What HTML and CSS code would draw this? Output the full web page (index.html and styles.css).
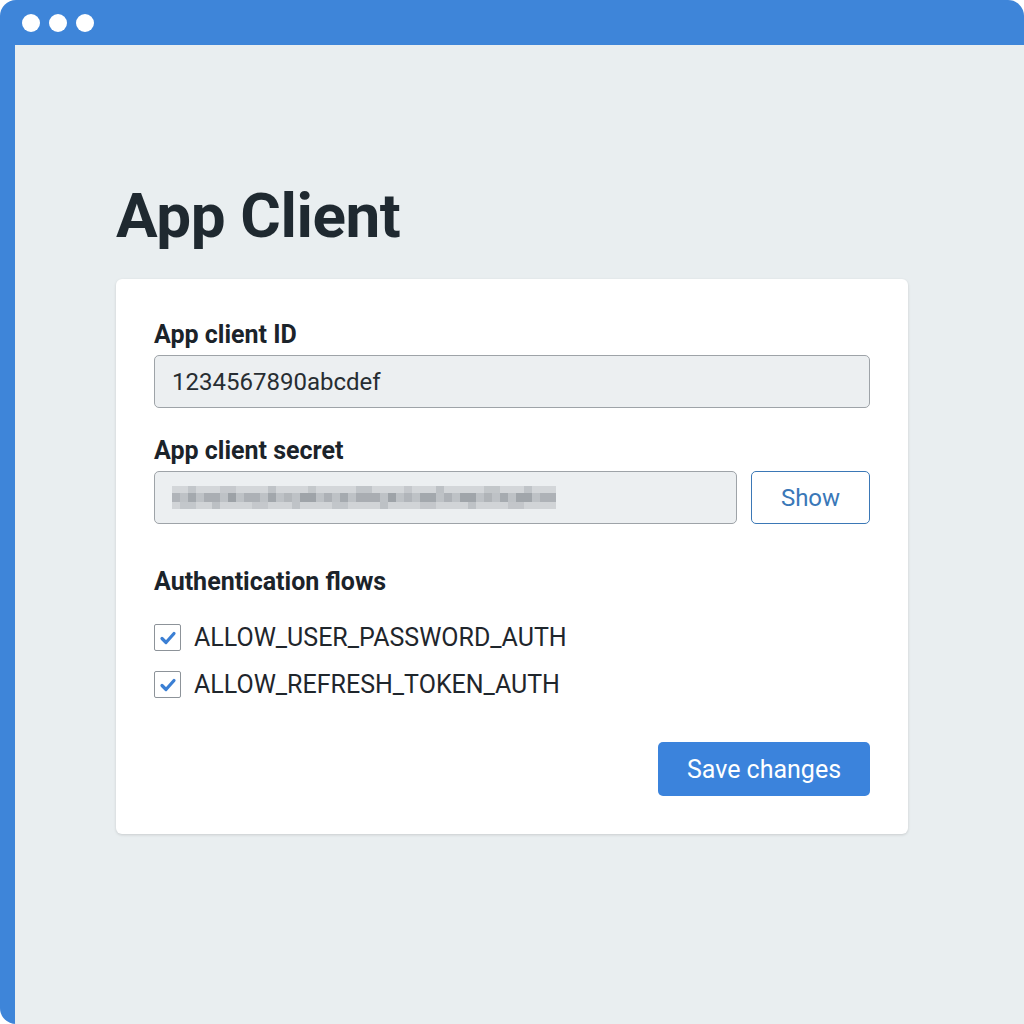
FILE: index.html
```html
<!DOCTYPE html>
<html lang="en">
<head>
   <meta charset="UTF-8">
   <meta name="viewport" content="width=device-width, initial-scale=1.0">
   <title>App Client</title>
   <link rel="stylesheet" href="styles.css">
</head>
<body>

<div class="window">
   <div class="titlebar">
       <span class="dot"></span>
       <span class="dot"></span>
       <span class="dot"></span>
   </div>

   <div class="page">
       <h1>App Client</h1>

       <div class="card">
           <!-- Client ID -->
           <div class="field">
               <label class="label">App client ID</label>
               <div class="input">1234567890abcdef</div>
           </div>

           <!-- Client secret -->
           <div class="field">
               <label class="label">App client secret</label>
               <div class="input-row">
                   <div class="input secret">
                       <svg class="blur" width="384" height="28" viewBox="0 0 384 28">
                           <rect x="0" y="2" width="384" height="7" fill="#d3d6d9"/>
                           <rect x="0" y="9" width="384" height="9" fill="#bec2c6"/>
                           <rect x="0" y="18" width="384" height="7" fill="#d1d4d7"/>
                           <rect x="16" y="2" width="8" height="7" fill="#c2c6ca"/>
                           <rect x="48" y="2" width="16" height="7" fill="#c6c9cd"/>
                           <rect x="96" y="2" width="8" height="7" fill="#bfc3c7"/>
                           <rect x="136" y="2" width="8" height="7" fill="#c4c8cb"/>
                           <rect x="184" y="2" width="16" height="7" fill="#c1c5c9"/>
                           <rect x="232" y="2" width="8" height="7" fill="#c5c8cc"/>
                           <rect x="264" y="2" width="8" height="7" fill="#bdc1c5"/>
                           <rect x="312" y="2" width="16" height="7" fill="#c3c7ca"/>
                           <rect x="352" y="2" width="8" height="7" fill="#c0c4c8"/>
                           <rect x="0" y="9" width="8" height="9" fill="#b0b4b9"/>
                           <rect x="16" y="9" width="8" height="9" fill="#a4a9ae"/>
                           <rect x="32" y="9" width="16" height="9" fill="#aaaeb3"/>
                           <rect x="56" y="9" width="8" height="9" fill="#9da2a7"/>
                           <rect x="72" y="9" width="16" height="9" fill="#adb1b6"/>
                           <rect x="96" y="9" width="8" height="9" fill="#a2a7ac"/>
                           <rect x="112" y="9" width="8" height="9" fill="#b3b7bb"/>
                           <rect x="128" y="9" width="16" height="9" fill="#9fa4a9"/>
                           <rect x="152" y="9" width="8" height="9" fill="#adb1b6"/>
                           <rect x="168" y="9" width="8" height="9" fill="#a5aaaf"/>
                           <rect x="184" y="9" width="24" height="9" fill="#a9adb2"/>
                           <rect x="216" y="9" width="8" height="9" fill="#9ea3a8"/>
                           <rect x="232" y="9" width="8" height="9" fill="#b1b5ba"/>
                           <rect x="248" y="9" width="16" height="9" fill="#a3a8ad"/>
                           <rect x="272" y="9" width="8" height="9" fill="#aeb2b7"/>
                           <rect x="288" y="9" width="16" height="9" fill="#a0a5aa"/>
                           <rect x="312" y="9" width="8" height="9" fill="#b0b4b8"/>
                           <rect x="328" y="9" width="8" height="9" fill="#a6abb0"/>
                           <rect x="344" y="9" width="16" height="9" fill="#a1a6ab"/>
                           <rect x="368" y="9" width="16" height="9" fill="#aeb2b7"/>
                           <rect x="8" y="18" width="16" height="7" fill="#c3c7cb"/>
                           <rect x="40" y="18" width="8" height="7" fill="#bcc0c4"/>
                           <rect x="80" y="18" width="16" height="7" fill="#c5c8cc"/>
                           <rect x="120" y="18" width="8" height="7" fill="#bfc3c7"/>
                           <rect x="160" y="18" width="16" height="7" fill="#c2c6ca"/>
                           <rect x="208" y="18" width="8" height="7" fill="#bdc1c5"/>
                           <rect x="248" y="18" width="16" height="7" fill="#c4c7cb"/>
                           <rect x="296" y="18" width="8" height="7" fill="#bec2c6"/>
                           <rect x="336" y="18" width="16" height="7" fill="#c3c6ca"/>
                       </svg>
                   </div>
                   <button class="btn-outline">Show</button>
               </div>
           </div>

           <!-- Flows -->
           <div class="field flows">
               <label class="label">Authentication flows</label>
               <div class="check-list">
                   <div class="check">
                       <span class="box">
                           <svg width="20" height="20" viewBox="0 0 20 20"><path d="M4 10.5 L8 14.5 L16 5.5" fill="none" stroke="#3b7fd4" stroke-width="3.2" stroke-linecap="round" stroke-linejoin="round"/></svg>
                       </span>
                       <span>ALLOW_USER_PASSWORD_AUTH</span>
                   </div>
                   <div class="check">
                       <span class="box">
                           <svg width="20" height="20" viewBox="0 0 20 20"><path d="M4 10.5 L8 14.5 L16 5.5" fill="none" stroke="#3b7fd4" stroke-width="3.2" stroke-linecap="round" stroke-linejoin="round"/></svg>
                       </span>
                       <span>ALLOW_REFRESH_TOKEN_AUTH</span>
                   </div>
               </div>
           </div>

           <div class="actions">
               <button class="btn-primary">Save changes</button>
           </div>
       </div>
   </div>
</div>

</body>
</html>
```

FILE: styles.css
```css
body {
    font-family: Roboto, "Liberation Sans", sans-serif;
    margin: 0;
    padding: 0;
    background-color: #ffffff;
    color: #1c242b;
}
.window {
    height: 1024px;
    background-color: #3e85d9;
    border-radius: 16px 16px 0 16px;
    padding-left: 15px;
    box-sizing: border-box;
    display: flex;
    flex-direction: column;
    overflow: hidden;
}
.titlebar {
    height: 45px;
    display: flex;
    align-items: center;
    gap: 9px;
    padding-left: 22px;
    margin-left: -15px;
}
.dot {
    width: 18px;
    height: 18px;
    border-radius: 50%;
    background-color: #ffffff;
}
.page {
    flex: 1;
    background-color: #e9eef0;
    padding: 139px 0 0 101px;
}
h1 {
    font-size: 62px;
    line-height: 64px;
    font-weight: 700;
    color: #1f2930;
    margin: 0 0 31px 0;
    letter-spacing: -0.4px;
}
.card {
    width: 792px;
    box-sizing: border-box;
    background-color: #ffffff;
    border-radius: 6px;
    box-shadow: 0 1px 3px rgba(0, 0, 0, 0.14);
    padding: 42px 38px 38px 38px;
}
.field {
    margin-bottom: 29px;
}
.field.flows {
    margin-top: 44px;
    margin-bottom: 44px;
}
.label {
    display: block;
    font-size: 25px;
    line-height: 28px;
    font-weight: 700;
    color: #1b232a;
    margin-bottom: 6px;
}
.input {
    height: 53px;
    box-sizing: border-box;
    background-color: #eceff1;
    border: 1.5px solid #9ea3a8;
    border-radius: 5px;
    padding: 0 17px;
    display: flex;
    align-items: center;
    font-size: 24px;
    color: #272d32;
}
.input-row {
    display: flex;
    gap: 14px;
}
.input.secret {
    flex: 1;
}
.blur {
    filter: blur(0.7px);
}
.btn-outline {
    width: 119px;
    height: 53px;
    background-color: #ffffff;
    border: 1.5px solid #3b78b6;
    border-radius: 5px;
    color: #3a78b8;
    font-family: Roboto, "Liberation Sans", sans-serif;
    font-size: 24px;
    cursor: pointer;
}
.check-list {
    margin-top: 28px;
    display: flex;
    flex-direction: column;
    gap: 20px;
}
.check {
    display: flex;
    align-items: center;
    gap: 13px;
    font-size: 25px;
    color: #1f262c;
    height: 27px;
}
.box {
    width: 27px;
    height: 27px;
    box-sizing: border-box;
    border: 1.5px solid #8d9399;
    border-radius: 2px;
    background-color: #ffffff;
    display: flex;
    align-items: center;
    justify-content: center;
}
.actions {
    display: flex;
    justify-content: flex-end;
}
.btn-primary {
    width: 212px;
    height: 54px;
    background-color: #3b83dc;
    border: none;
    border-radius: 5px;
    color: #ffffff;
    font-family: Roboto, "Liberation Sans", sans-serif;
    font-size: 25px;
    cursor: pointer;
}
```
